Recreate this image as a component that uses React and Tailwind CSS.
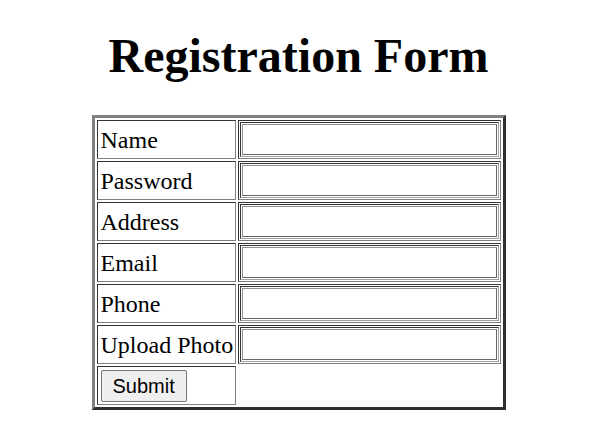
import React from "react";

const fields = ["Name", "Password", "Address", "Email", "Phone", "Upload Photo"];

const cell =
  "h-[39px] border border-t-[#333] border-l-[#333] border-r-[#808080] border-b-[#808080] p-[1px] flex items-center";

const Field = ({ label }) => (
  <>
    <div className={cell}>
      <span className="pl-[2px] text-[24px] leading-none whitespace-nowrap">{label}</span>
    </div>
    <div className={cell}>
      {/* double-lined text box */}
      <div className="h-full w-full border border-t-[#333] border-l-[#333] border-r-[#a0a0a0] border-b-[#a0a0a0] p-[1px]">
        <div className="h-full w-full border border-t-[#909090] border-l-[#909090] border-r-[#666] border-b-[#666] bg-white" />
      </div>
    </div>
  </>
);

export default function App() {
  return (
    <div className="bg-white text-black font-['Liberation_Serif',serif] pt-[28px] pb-[30px]">
      <h1 className="text-center text-[48px] font-bold leading-[56px]">
        Registration Form
      </h1>

      <div className="mt-[31px] flex justify-center">
        <div className="w-[414px] border-[3px] border-t-[#808080] border-l-[#808080] border-r-[#2f2f2f] border-b-[#2f2f2f] p-[2px]">
          <div className="grid grid-cols-[139px_263px] gap-[2px]">
            {fields.map((f) => (
              <Field key={f} label={f} />
            ))}
            <div className={cell}>
              <button className="ml-[2px] h-[32px] px-[11px] rounded-[2px] border border-[#767676] bg-[#efefef] text-[20px] leading-none font-['Liberation_Sans',sans-serif] text-black">
                Submit
              </button>
            </div>
            <div />
          </div>
        </div>
      </div>
    </div>
  );
}
